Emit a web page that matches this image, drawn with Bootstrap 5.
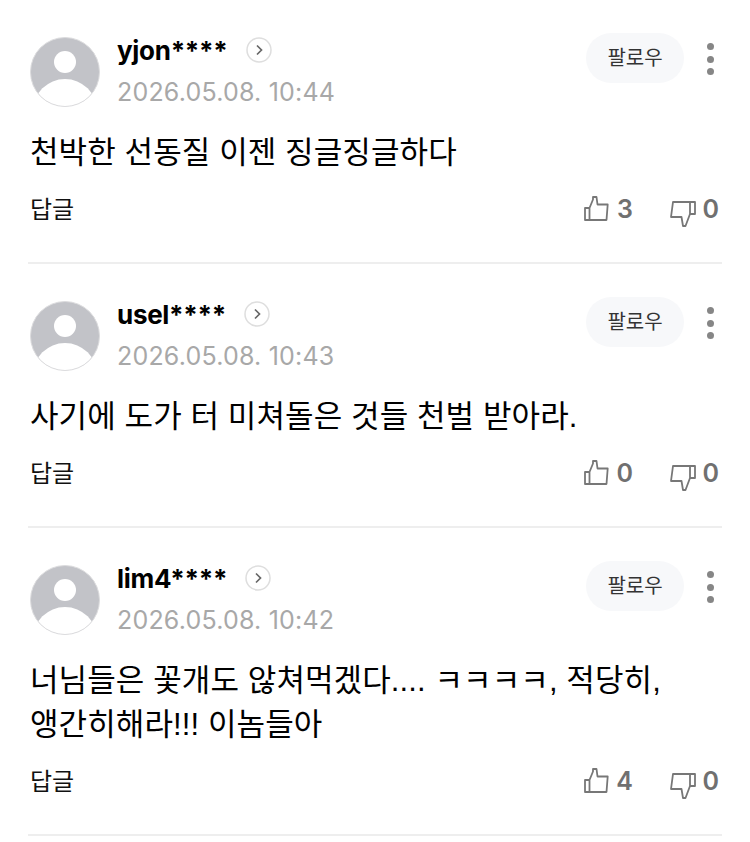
<!DOCTYPE html>
<html lang="ko">
<head>
  <meta charset="UTF-8">
  <title>댓글</title>
  <meta name="viewport" content="width=device-width, initial-scale=1.0">
  <link rel="stylesheet" href="https://cdn.jsdelivr.net/npm/bootstrap@5.3.0/dist/css/bootstrap.min.css">
  <style>
    body { font-family: "Liberation Sans", "Noto Sans CJK KR", sans-serif; background: #fff; color: #000; overflow: hidden; }
    .cmt-list { padding: 0 28px; }
    .cmt-item { border-bottom: 2px solid #eeeeee; height: 264px; padding: 32px 0 0 2px; }
    .cmt-item.tall { height: 308px; }
    .cmt-avatar { width: 70px; height: 70px; margin-top: 5px; flex-shrink: 0; }
    .cmt-who { margin-left: 17px; }
    .cmt-name { font-family: Inter, sans-serif; font-size: 26px; font-weight: 700; line-height: 36px; height: 36px; letter-spacing: -0.3px; padding-top: 1px; }
    .cmt-go { width: 26px; height: 26px; margin-left: 18px; }
    .cmt-date { font-family: Inter, sans-serif; font-size: 25px; line-height: 36px; margin-top: 6px; color: #a8a8a8; letter-spacing: .2px; }
    .cmt-follow { width: 98px; height: 50px; border-radius: 25px; background: #f7f8fa; font-size: 20px; color: #333; border: 0; padding: 0; margin-top: 1px; }
    .cmt-more { width: 7px; margin: 11px 8px 0 23px; }
    .cmt-more i { display: block; width: 7px; height: 7px; border-radius: 50%; background: #868686; margin-bottom: 5.5px; }
    .cmt-text { font-size: 31px; line-height: 44px; margin: 20px 0 0; letter-spacing: .1px; padding-top: 1px; }
    .cmt-foot { margin-top: 15px; height: 40px; padding-right: 3px; }
    .cmt-reply { font-size: 24px; color: #111; }
    .cmt-count { font-family: Inter, sans-serif; font-size: 25px; font-weight: 600; color: #707070; }
    .cmt-up { width: 25px; height: 25px; margin-top: -3px; }
    .cmt-down { width: 26px; height: 26px; margin-top: 7px; }
    .cmt-vote { width: 49px; }
    .cmt-vote + .cmt-vote { margin-left: 37px; width: 49px; }
  </style>
</head>
<body>
<svg width="0" height="0" class="d-block">
  <defs><clipPath id="av-clip"><circle cx="35" cy="35" r="34.5"/></clipPath></defs>
  <symbol id="ic-avatar" viewBox="0 0 70 70">
    <circle cx="35" cy="35" r="34.500" fill="#c2c3c8"/>
    <circle cx="35" cy="25" r="11" fill="#fff"/>
    <circle cx="35" cy="74" r="32" fill="#fff" clip-path="url(#av-clip)"/>
    <circle cx="35" cy="35" r="34.500" fill="none" stroke="#dcdcde" stroke-width="1"/>
  </symbol>
  <symbol id="ic-go" viewBox="0 0 26 26">
    <circle cx="13" cy="13" r="12" fill="#fff" stroke="#dedede" stroke-width="1.500"/>
    <path d="M11 8.500l4.500 4.500-4.500 4.500" fill="none" stroke="#666" stroke-width="1.700"/>
  </symbol>
  <symbol id="ic-up" viewBox="0 0 25 25">
    <path d="M1 12h4.500v12H1zM5.500 12L9 3.500V1h3.500l1 7.500h10.200L22.500 24H5.500" fill="none" stroke="#777" stroke-width="1.800" stroke-linejoin="round"/>
  </symbol>
  <symbol id="ic-down" viewBox="0 0 26 26">
    <path d="M20 1h5v12h-5zM20 1H3L1 16h10.500L13 25h2.500L20 13" fill="none" stroke="#777" stroke-width="1.800" stroke-linejoin="round"/>
  </symbol>
</svg>

<div class="cmt-list">
  <div class="cmt-item">
    <div class="d-flex">
      <svg class="cmt-avatar"><use href="#ic-avatar"/></svg>
      <div class="cmt-who flex-grow-1">
        <div class="d-flex align-items-center"><span class="cmt-name">yjon****</span><svg class="cmt-go"><use href="#ic-go"/></svg></div>
        <div class="cmt-date">2026.05.08. 10:44</div>
      </div>
      <button type="button" class="btn cmt-follow">팔로우</button>
      <div class="cmt-more"><i></i><i></i><i></i></div>
    </div>
    <p class="cmt-text">천박한 선동질 이젠 징글징글하다</p>
    <div class="cmt-foot d-flex align-items-center">
      <span class="cmt-reply me-auto">답글</span>
      <div class="cmt-vote d-flex align-items-center justify-content-between"><svg class="cmt-up"><use href="#ic-up"/></svg><span class="cmt-count">3</span></div>
      <div class="cmt-vote d-flex align-items-center justify-content-between"><svg class="cmt-down"><use href="#ic-down"/></svg><span class="cmt-count">0</span></div>
    </div>
  </div>

  <div class="cmt-item">
    <div class="d-flex">
      <svg class="cmt-avatar"><use href="#ic-avatar"/></svg>
      <div class="cmt-who flex-grow-1">
        <div class="d-flex align-items-center"><span class="cmt-name">usel****</span><svg class="cmt-go"><use href="#ic-go"/></svg></div>
        <div class="cmt-date">2026.05.08. 10:43</div>
      </div>
      <button type="button" class="btn cmt-follow">팔로우</button>
      <div class="cmt-more"><i></i><i></i><i></i></div>
    </div>
    <p class="cmt-text">사기에 도가 터 미쳐돌은 것들 천벌 받아라.</p>
    <div class="cmt-foot d-flex align-items-center">
      <span class="cmt-reply me-auto">답글</span>
      <div class="cmt-vote d-flex align-items-center justify-content-between"><svg class="cmt-up"><use href="#ic-up"/></svg><span class="cmt-count">0</span></div>
      <div class="cmt-vote d-flex align-items-center justify-content-between"><svg class="cmt-down"><use href="#ic-down"/></svg><span class="cmt-count">0</span></div>
    </div>
  </div>

  <div class="cmt-item tall">
    <div class="d-flex">
      <svg class="cmt-avatar"><use href="#ic-avatar"/></svg>
      <div class="cmt-who flex-grow-1">
        <div class="d-flex align-items-center"><span class="cmt-name">lim4****</span><svg class="cmt-go"><use href="#ic-go"/></svg></div>
        <div class="cmt-date">2026.05.08. 10:42</div>
      </div>
      <button type="button" class="btn cmt-follow">팔로우</button>
      <div class="cmt-more"><i></i><i></i><i></i></div>
    </div>
    <p class="cmt-text">너님들은 꽃개도 않쳐먹겠다.... ㅋㅋㅋㅋ, 적당히,<br>앵간히해라!!! 이놈들아</p>
    <div class="cmt-foot d-flex align-items-center">
      <span class="cmt-reply me-auto">답글</span>
      <div class="cmt-vote d-flex align-items-center justify-content-between"><svg class="cmt-up"><use href="#ic-up"/></svg><span class="cmt-count">4</span></div>
      <div class="cmt-vote d-flex align-items-center justify-content-between"><svg class="cmt-down"><use href="#ic-down"/></svg><span class="cmt-count">0</span></div>
    </div>
  </div>
</div>

<script src="https://cdn.jsdelivr.net/npm/bootstrap@5.3.0/dist/js/bootstrap.bundle.min.js"></script>
</body>
</html>
